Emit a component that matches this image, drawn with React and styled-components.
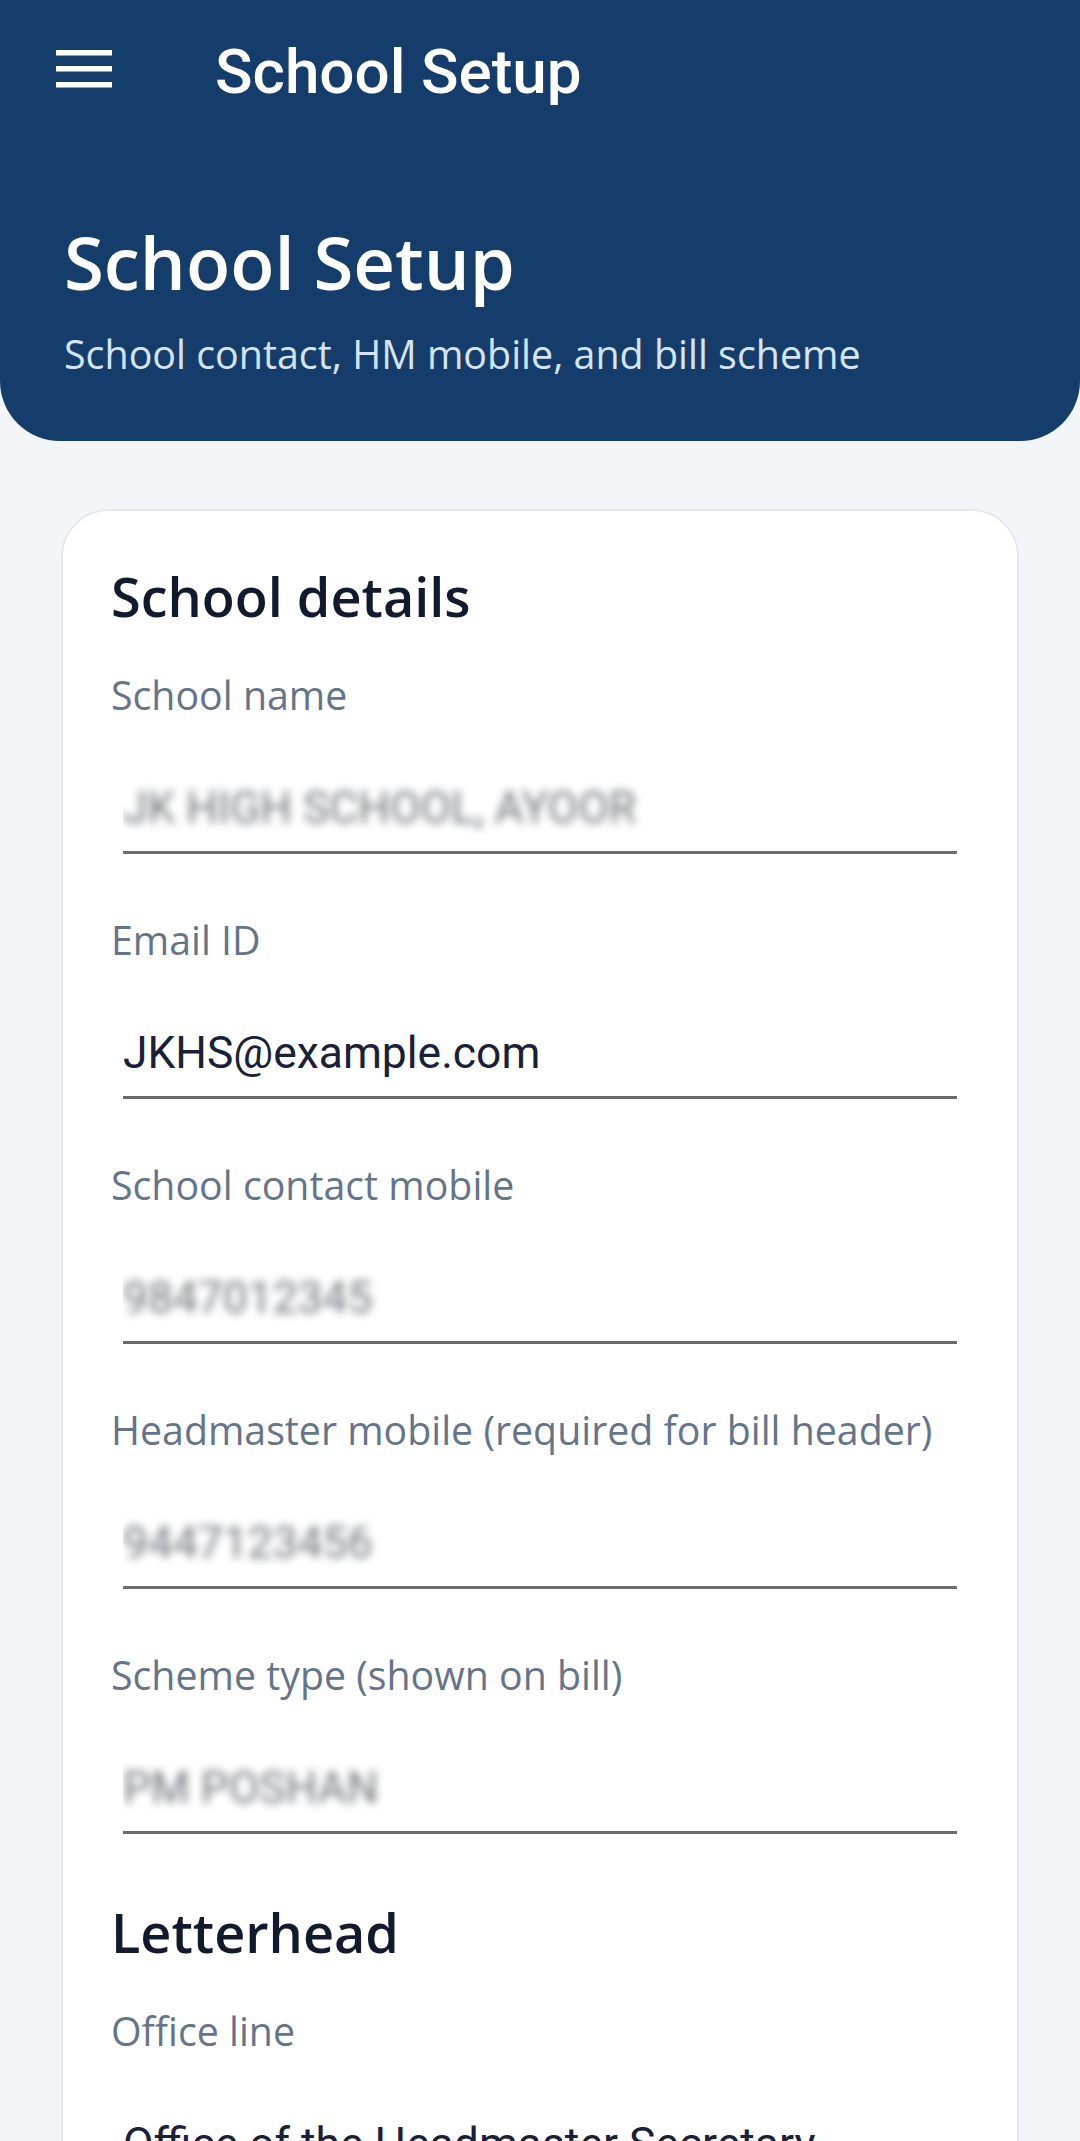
import React from 'react'
import styled, { createGlobalStyle } from 'styled-components'

const GlobalStyle = createGlobalStyle`
  html, body {
    margin: 0;
    padding: 0;
    background: #f2f6f9;
  }
  body {
    font-family: "Open Sans", "Noto Sans", sans-serif;
  }
  * {
    box-sizing: border-box;
  }
`

const schoolFields = [
    { label: 'School name', value: 'JK HIGH SCHOOL, AYOOR', redacted: true },
    { label: 'Email ID', value: 'JKHS@example.com' },
    { label: 'School contact mobile', value: '9847012345', redacted: true },
    { label: 'Headmaster mobile (required for bill header)', value: '9447123456', redacted: true },
    { label: 'Scheme type (shown on bill)', value: 'PM POSHAN', redacted: true },
]

const letterheadFields = [
    { label: 'Office line', value: 'Office of the Headmaster Secretary' },
    { label: 'Address', value: 'Main Road, Ayoor' },
]

function MenuIcon() {
    return (
        <MenuButton type="button" aria-label="Menu">
            <svg width="56" height="38" viewBox="0 0 56 38" fill="#ffffff">
                <rect x="0" y="0" width="56" height="5.5" />
                <rect x="0" y="16" width="56" height="5.5" />
                <rect x="0" y="32" width="56" height="5.5" />
            </svg>
        </MenuButton>
    )
}

function Field(props) {
    return (
        <FieldBox>
            <FieldLabel>{props.label}</FieldLabel>
            <TextInput
                type="text"
                readOnly
                defaultValue={props.value}
                $redacted={props.redacted}
            />
        </FieldBox>
    )
}

export default function App() {
    return (
        <>
            <GlobalStyle />
            <Header>
                <TopBar>
                    <MenuIcon />
                    <BarTitle>School Setup</BarTitle>
                </TopBar>
                <Hero>
                    <HeroTitle>School Setup</HeroTitle>
                    <HeroSubtitle>School contact, HM mobile, and bill scheme</HeroSubtitle>
                </Hero>
            </Header>
            <Main>
                <Card>
                    <SectionTitle>School details</SectionTitle>
                    {schoolFields.map((f, index) => (
                        <Field key={index} label={f.label} value={f.value} redacted={f.redacted} />
                    ))}
                    <SectionTitle $spaced>Letterhead</SectionTitle>
                    {letterheadFields.map((f, index) => (
                        <Field key={index} label={f.label} value={f.value} />
                    ))}
                </Card>
            </Main>
        </>
    )
}

const Header = styled.header`
    background: #153d6b;
    border-radius: 0 0 60px 60px;
    color: #ffffff;
`

const TopBar = styled.div`
    display: flex;
    align-items: center;
    height: 144px;
    padding-left: 56px;
`

const MenuButton = styled.button`
    display: flex;
    background: none;
    border: none;
    padding: 0;
    margin: 0 103px 6px 0;
    cursor: pointer;
`

const BarTitle = styled.div`
    font-family: Roboto, "Liberation Sans", sans-serif;
    font-weight: 500;
    font-size: 62px;
    line-height: 1.17;
    color: #ffffff;
`

const Hero = styled.div`
    display: flex;
    flex-direction: column;
    gap: 19px;
    padding: 72px 64px 59px;
`

const HeroTitle = styled.h1`
    margin: 0;
    font-size: 72.5px;
    font-weight: 600;
    line-height: 92px;
    color: #ffffff;
`

const HeroSubtitle = styled.p`
    margin: 0;
    font-size: 39.4px;
    line-height: 55px;
    color: #d5e4f9;
`

const Main = styled.main`
    padding: 68px 61px 80px;
`

const Card = styled.section`
    background: #ffffff;
    border: 2px solid #e2e8f0;
    border-radius: 48px;
    padding: 50px 48px 60px;
    display: flex;
    flex-direction: column;
`

const SectionTitle = styled.h2`
    margin: ${props => props.$spaced ? '5px' : '0'} 0 36px;
    font-size: 54px;
    font-weight: 600;
    line-height: 70px;
    color: #121a2e;
`

const FieldBox = styled.div`
    display: flex;
    flex-direction: column;
    margin-bottom: 58px;
`

const FieldLabel = styled.label`
    font-size: 39.3px;
    line-height: 56px;
    color: #64748b;
    margin-bottom: 42px;
`

const TextInput = styled.input`
    appearance: none;
    margin: 0 12px;
    padding: 17px 0;
    border: none;
    border-bottom: 3px solid #6b6b6b;
    border-radius: 0;
    background: transparent;
    outline: none;
    font-family: Roboto, "Liberation Sans", sans-serif;
    font-size: 44.4px;
    line-height: 52px;
    height: 89px;
    color: ${props => props.$redacted ? 'transparent' : '#18203a'};
    text-shadow: ${props => props.$redacted ? '0 0 9px rgba(70, 72, 80, 0.75)' : 'none'};
`
